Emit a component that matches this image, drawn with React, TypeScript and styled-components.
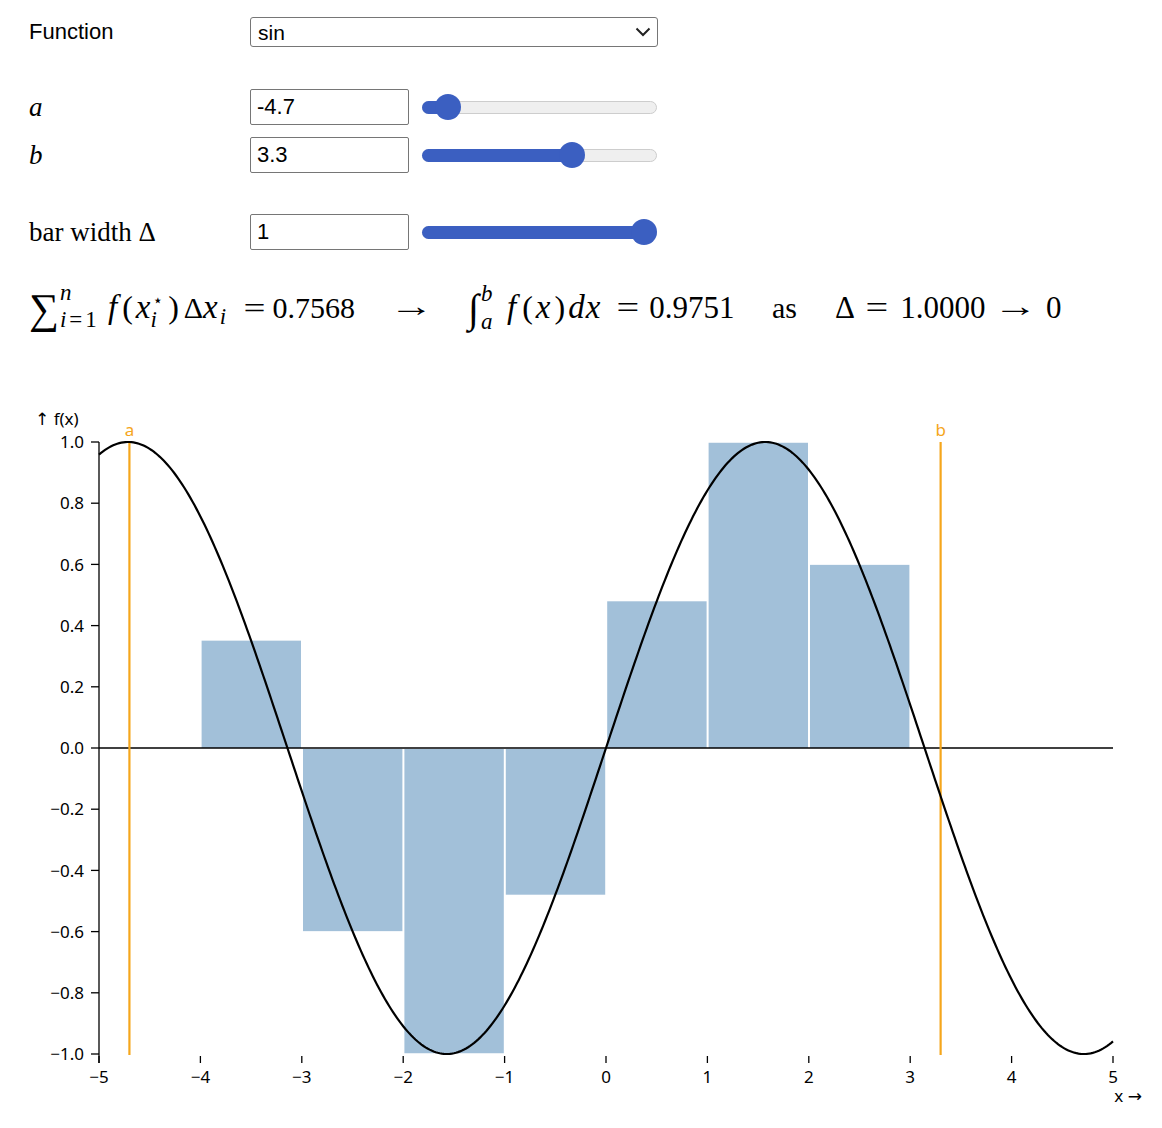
import React from 'react';
import styled, { createGlobalStyle } from 'styled-components';

const GlobalStyle = createGlobalStyle`
  html, body { margin: 0; padding: 0; background: #fff; }
  body { font-family: "Liberation Sans", Arial, sans-serif; color: #000; }
`;

const Page = styled.div`
  width: 1162px;
`;

const Controls = styled.div`
  padding: 17px 0 0 29px;
`;

const ControlRow = styled.div<{ $mt: number }>`
  display: flex;
  align-items: center;
  margin-top: ${(p) => p.$mt}px;
`;

const Label = styled.div<{ $math?: boolean }>`
  width: 221px;
  flex: none;
  font-family: ${(p) => (p.$math ? '"Liberation Serif", serif' : '"Liberation Sans", Arial, sans-serif')};
  font-size: ${(p) => (p.$math ? '27px' : '22px')};
`;

const MathVar = styled.i`
  font-family: "Liberation Serif", serif;
  font-style: italic;
`;

const SelectWrap = styled.div`
  position: relative;
  width: 408px;
  height: 30px;
`;

const Select = styled.select`
  appearance: none;
  -webkit-appearance: none;
  width: 408px;
  height: 30px;
  box-sizing: border-box;
  font-family: "Liberation Sans", Arial, sans-serif;
  font-size: 21px;
  padding: 0 0 0 7px;
  border: 1px solid #767676;
  border-radius: 3px;
  background: #fff;
  color: #000;
`;

const Chevron = styled.svg`
  position: absolute;
  right: 7px;
  top: 10px;
  pointer-events: none;
`;

const NumberInput = styled.input`
  width: 159px;
  height: 36px;
  box-sizing: border-box;
  border: 1px solid #767676;
  border-radius: 2px;
  padding: 0 6px;
  font-family: "Liberation Sans", Arial, sans-serif;
  font-size: 22px;
  color: #000;
  background: #fff;
`;

const Track = styled.div`
  position: relative;
  width: 235px;
  height: 13px;
  margin-left: 13px;
  box-sizing: border-box;
  border: 1px solid #cdcdcd;
  background: #efefef;
  border-radius: 7px;
`;

const Fill = styled.div`
  position: absolute;
  left: -1px;
  top: -1px;
  bottom: -1px;
  background: #3b5fc1;
  border-radius: 7px;
`;

const Thumb = styled.div`
  position: absolute;
  top: 50%;
  width: 26px;
  height: 26px;
  margin: -13px 0 0 -13px;
  border-radius: 50%;
  background: #3b5fc1;
`;

const Slider: React.FC<{ frac: number }> = ({ frac }) => {
  const c = 12 + frac * 209;
  return (
    <Track>
      <Fill style={{ width: c + 1 }} />
      <Thumb style={{ left: c }} />
    </Track>
  );
};

const Formula = styled.div`
  margin-top: 28px;
  height: 56px;
  padding-left: 29px;
  display: flex;
  align-items: baseline;
  line-height: 56px;
  font-family: "Liberation Serif", "DejaVu Serif", serif;
  font-size: 30px;
  white-space: nowrap;
`;

const Group = styled.span<{ $w?: number; $size?: number }>`
  flex: none;
  ${(p) => (p.$w ? `width: ${p.$w}px;` : '')}
  ${(p) => (p.$size ? `font-size: ${p.$size}px;` : '')}
`;

const BigOp = styled.span<{ $size: number; $va: number }>`
  font-size: ${(p) => p.$size}px;
  display: inline-block;
  vertical-align: ${(p) => p.$va}px;
`;

const Scripts = styled.span<{ $raise: number; $gap: number; $ml?: number }>`
  display: inline-flex;
  flex-direction: column;
  align-items: flex-start;
  vertical-align: ${(p) => p.$raise}px;
  font-size: 23px;
  line-height: ${(p) => p.$gap}px;
  margin-left: ${(p) => p.$ml ?? 2}px;
  margin-right: 2px;
`;

const Sub = styled.span`
  font-size: 23px;
  vertical-align: -6px;
  line-height: 0;
  margin-left: 2px;
`;

const It = styled.i<{ $mr?: number; $small?: boolean }>`
  font-style: italic;
  font-size: ${(p) => (p.$small ? 23 : 33)}px;
  margin-right: ${(p) => p.$mr ?? 1}px;
`;

const Paren = styled.span`
  font-size: 32px;
  margin: 0 3px;
`;

const Rel = styled.span<{ $m: number }>`
  display: inline-block;
  margin: 0 ${(p) => p.$m}px;
  transform: scaleX(1.3);
`;

const Arrow = styled.span<{ $m?: number }>`
  font-size: 37px;
  display: inline-block;
  margin: 0 ${(p) => p.$m ?? 0}px;
  transform: scale(1.2, 0.8);
`;

const ScriptEq = styled.span`
  margin: 0 3px;
`;

const Star = styled.span`
  font-family: "DejaVu Sans", sans-serif;
  font-size: 17px;
  margin-left: 2px;
`;

const DeltaSym = styled.span`
  margin-left: 2px;
`;

const Chart = styled.svg`
  display: block;
  margin-top: 66px;
`;

const ChartText = styled.text<{ $color?: string }>`
  font-family: "Noto Sans", "DejaVu Sans", sans-serif;
  font-size: 17px;
  fill: ${(p) => p.$color ?? '#000'};
`;

const X0 = 99;
const X1 = 1113;
const YT = 442;
const YB = 1054;
const ORANGE = '#f5a61c';
const sx = (v: number) => X0 + ((v + 5) * (X1 - X0)) / 10;
const sy = (v: number) => YB - ((v + 1) * (YB - YT)) / 2;
const fmt = (v: number) => (v === 0 ? '0' : v < 0 ? '\u2212' + Math.abs(v) : String(v));
const fmt1 = (v: number) => {
  if (Math.abs(v) < 1e-9) return '0.0';
  return (v < 0 ? '\u2212' : '') + Math.abs(v).toFixed(1);
};

const A = -4.7;
const B = 3.3;

const bars = [-4, -3, -2, -1, 0, 1, 2].map((x) => ({ x1: x, x2: x + 1, h: Math.sin(x + 0.5) }));

const curve = (() => {
  const pts: string[] = [];
  for (let i = 0; i <= 500; i++) {
    const t = -5 + (10 * i) / 500;
    pts.push(`${sx(t).toFixed(2)},${sy(Math.sin(t)).toFixed(2)}`);
  }
  return 'M' + pts.join('L');
})();

const yTicks = Array.from({ length: 11 }, (_, i) => -1 + i * 0.2);
const xTicks = Array.from({ length: 11 }, (_, i) => -5 + i);

const RiemannChart: React.FC = () => (
  <Chart width={1162} height={720} viewBox="0 400 1162 720">
    {bars.map((b) => {
      const y0 = sy(0);
      const yh = sy(b.h);
      return (
        <rect
          key={b.x1}
          x={sx(b.x1) + 1.2}
          width={sx(b.x2) - sx(b.x1) - 2}
          y={Math.min(y0, yh) + (b.h < 0 ? 1 : 0)}
          height={Math.abs(yh - y0) - (b.h < 0 ? 1 : 0)}
          fill="steelblue"
          fillOpacity={0.5}
        />
      );
    })}
    <line x1={X0} x2={X1} y1={sy(0)} y2={sy(0)} stroke="#000" strokeWidth={1.3} />
    <line x1={X0} x2={X0} y1={YT} y2={1063} stroke="#000" strokeWidth={1.3} />
    {yTicks.map((v) => (
      <g key={v.toFixed(1)}>
        <line x1={91} x2={X0} y1={sy(v)} y2={sy(v)} stroke="#000" strokeWidth={1.3} />
        <ChartText x={84} y={sy(v)} dy="0.36em" textAnchor="end">
          {fmt1(v)}
        </ChartText>
      </g>
    ))}
    {xTicks.map((v) => (
      <g key={v}>
        <line x1={sx(v)} x2={sx(v)} y1={1056} y2={1063} stroke="#000" strokeWidth={1.3} />
        <ChartText x={sx(v)} y={1083} textAnchor="middle">
          {fmt(v)}
        </ChartText>
      </g>
    ))}
    <ChartText x={35} y={425}>↑ f(x)</ChartText>
    <ChartText x={1142} y={1102} textAnchor="end">x →</ChartText>
    <line x1={sx(A)} x2={sx(A)} y1={YT} y2={YB + 1} stroke={ORANGE} strokeWidth={2.2} />
    <line x1={sx(B)} x2={sx(B)} y1={YT} y2={YB + 1} stroke={ORANGE} strokeWidth={2.2} />
    <ChartText x={sx(A)} y={436} textAnchor="middle" $color={ORANGE}>a</ChartText>
    <ChartText x={sx(B)} y={436} textAnchor="middle" $color={ORANGE}>b</ChartText>
    <path d={curve} fill="none" stroke="#000" strokeWidth={2.2} />
  </Chart>
);

export default function App() {
  return (
    <Page>
      <GlobalStyle />
      <Controls>
        <ControlRow $mt={0}>
          <Label>Function</Label>
          <SelectWrap>
            <Select defaultValue="sin">
              <option value="sin">sin</option>
              <option value="cos">cos</option>
              <option value="square">square</option>
            </Select>
            <Chevron width="16" height="10" viewBox="0 0 16 10">
              <path d="M1.5 1.5 L8 8 L14.5 1.5" fill="none" stroke="#222" strokeWidth="2" />
            </Chevron>
          </SelectWrap>
        </ControlRow>
        <ControlRow $mt={42}>
          <Label $math>
            <MathVar>a</MathVar>
          </Label>
          <NumberInput type="text" defaultValue="-4.7" />
          <Slider frac={0.062} />
        </ControlRow>
        <ControlRow $mt={12}>
          <Label $math>
            <MathVar>b</MathVar>
          </Label>
          <NumberInput type="text" defaultValue="3.3" />
          <Slider frac={0.656} />
        </ControlRow>
        <ControlRow $mt={41}>
          <Label $math>bar width Δ</Label>
          <NumberInput type="text" defaultValue="1" />
          <Slider frac={1} />
        </ControlRow>
      </Controls>
      <Formula>
        <Group $w={79}>
          <BigOp $size={42} $va={-5}>∑</BigOp>
          <Scripts $raise={18} $gap={27} $ml={1}>
            <It $mr={0} $small>n</It>
            <span>
              <It $mr={0} $small>i</It>
              <ScriptEq>=</ScriptEq>1
            </span>
          </Scripts>
        </Group>
        <Group $w={136}>
          <It $mr={2}>f</It>
          <Paren>(</Paren>
          <It $mr={0}>x</It>
          <Scripts $raise={12} $gap={20} $ml={0}>
            <Star>⋆</Star>
            <It $mr={0} $small>i</It>
          </Scripts>
          <Paren>)</Paren>
          <DeltaSym>Δ</DeltaSym>
          <It $mr={0}>x</It>
          <Sub>
            <It $mr={0} $small>i</It>
          </Sub>
        </Group>
        <Group $w={149}>
          <Rel $m={2}>=</Rel> 0.7568
        </Group>
        <Group $w={75}>
          <Arrow>→</Arrow>
        </Group>
        <Group $w={39}>
          <BigOp $size={40} $va={-4}>∫</BigOp>
          <Scripts $raise={17} $gap={28} $ml={2}>
            <It $mr={0} $small>b</It>
            <It $mr={0} $small>a</It>
          </Scripts>
        </Group>
        <Group $w={107}>
          <It $mr={3}>f</It>
          <Paren>(</Paren>
          <It $mr={1}>x</It>
          <Paren>)</Paren>
          <It $mr={1}>d</It>
          <It $mr={0}>x</It>
        </Group>
        <Group $w={158} $size={31}>
          <Rel $m={5}>=</Rel> 0.9751
        </Group>
        <Group $w={63}>as</Group>
        <Group $size={31}>
          Δ <Rel $m={7}>=</Rel> 1.0000 <Arrow $m={4}>→</Arrow> 0
        </Group>
      </Formula>
      <RiemannChart />
    </Page>
  );
}
